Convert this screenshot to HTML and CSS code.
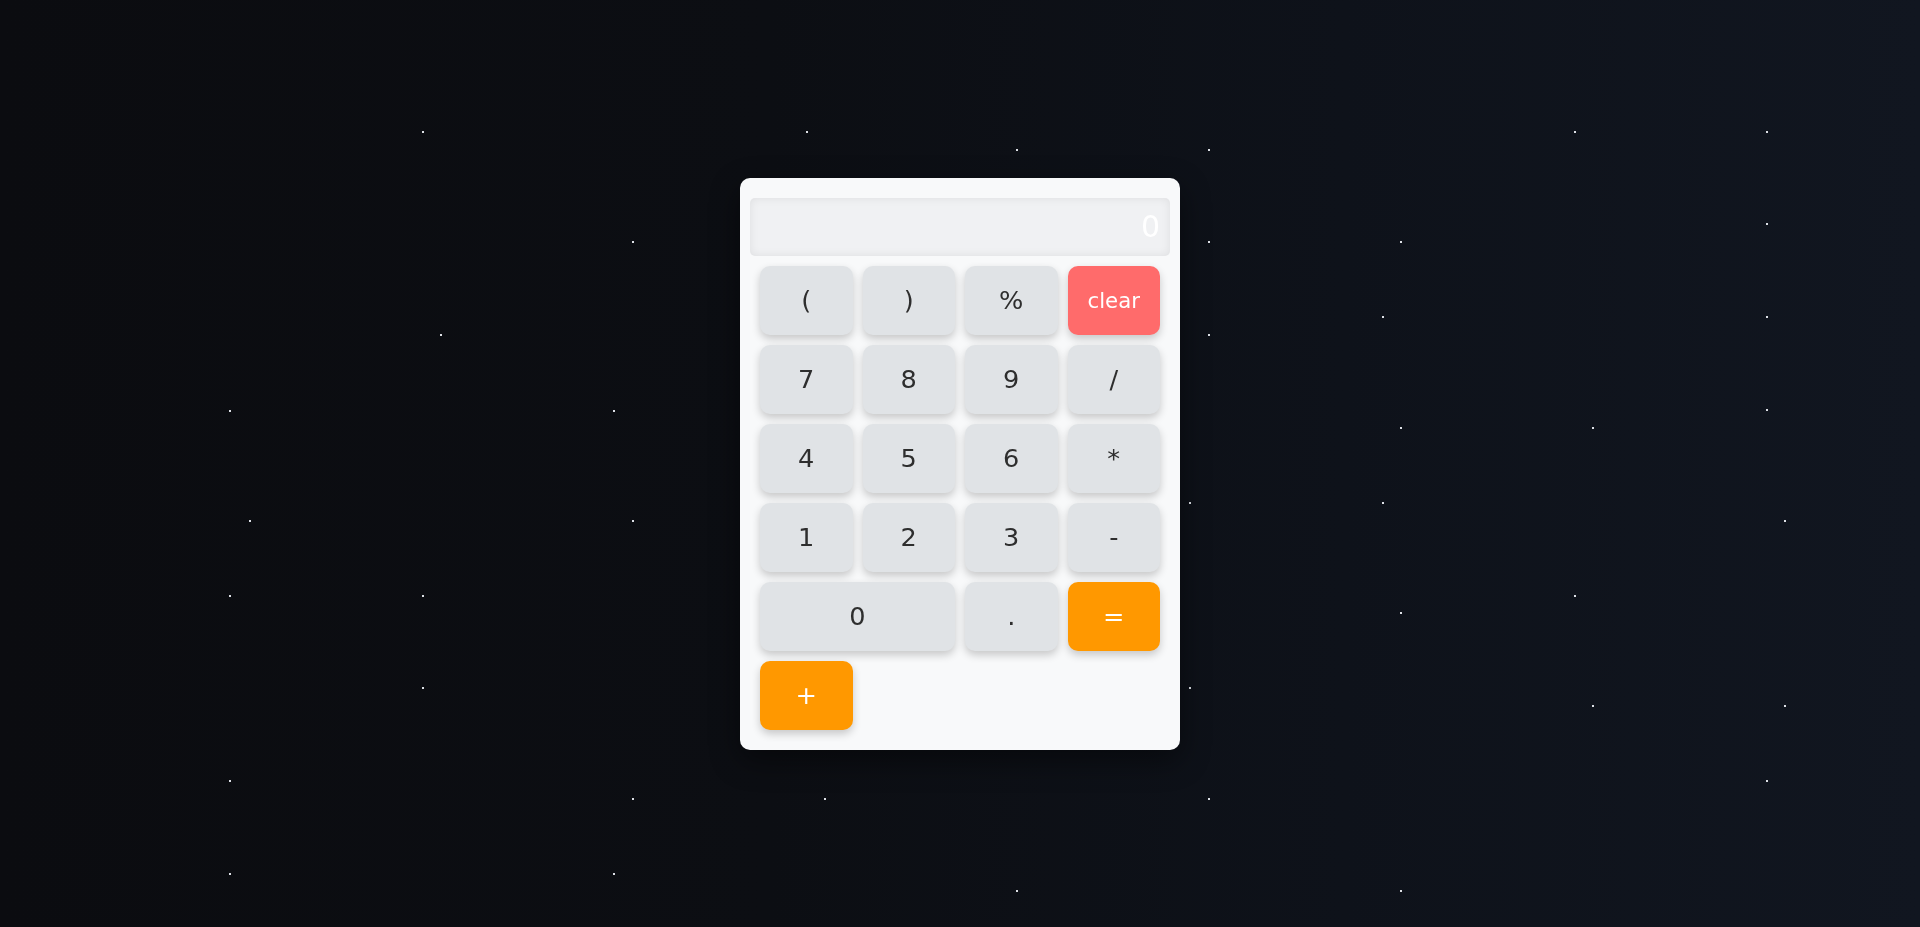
FILE: index.html
```html
<!DOCTYPE html>
<html lang="en">
<head>
<meta charset="utf-8">
<title>Calculator</title>
<link rel="stylesheet" href="styles.css">
</head>
<body>
<div class="stars" aria-hidden="true"></div>
<main class="calculator">
  <div class="display">0</div>
  <div class="keys">
    <button class="key">(</button>
    <button class="key">)</button>
    <button class="key">%</button>
    <button class="key key-clear">clear</button>
    <button class="key">7</button>
    <button class="key">8</button>
    <button class="key">9</button>
    <button class="key">/</button>
    <button class="key">4</button>
    <button class="key">5</button>
    <button class="key">6</button>
    <button class="key">*</button>
    <button class="key">1</button>
    <button class="key">2</button>
    <button class="key">3</button>
    <button class="key">-</button>
    <button class="key key-wide">0</button>
    <button class="key">.</button>
    <button class="key key-op">=</button>
    <button class="key key-op">+</button>
  </div>
</main>
</body>
</html>
```
FILE: styles.css
```css
* { box-sizing: border-box; }

html, body {
  margin: 0;
  height: 100%;
}

body {
  display: flex;
  align-items: center;
  justify-content: center;
  min-height: 100vh;
  background: linear-gradient(90deg, #0b0c10 0%, #0c0e13 40%, #0e121a 70%, #111620 100%);
  font-family: "DejaVu Sans", Verdana, sans-serif;
  overflow: hidden;
}

.stars {
  position: fixed;
  inset: 0;
  pointer-events: none;
}

.stars::before {
  content: "";
  position: absolute;
  left: 0;
  top: 0;
  width: 2px;
  height: 2px;
  background: transparent;
  box-shadow:
    422px 131px 0 0 #dde0e6, 806px 131px 0 0 #dde0e6, 1016px 149px 0 0 #dde0e6, 1208px 149px 0 0 #dde0e6,
    1574px 131px 0 0 #dde0e6, 1766px 131px 0 0 #dde0e6, 632px 241px 0 0 #dde0e6, 1208px 241px 0 0 #dde0e6,
    1400px 241px 0 0 #dde0e6, 1766px 223px 0 0 #dde0e6, 440px 334px 0 0 #dde0e6, 1208px 334px 0 0 #dde0e6,
    1382px 316px 0 0 #dde0e6, 1766px 316px 0 0 #dde0e6, 229px 410px 0 0 #dde0e6, 613px 410px 0 0 #dde0e6,
    1766px 409px 0 0 #dde0e6, 1400px 427px 0 0 #dde0e6, 1592px 427px 0 0 #dde0e6, 249px 520px 0 0 #dde0e6,
    632px 520px 0 0 #dde0e6, 1189px 502px 0 0 #dde0e6, 1382px 502px 0 0 #dde0e6, 1784px 520px 0 0 #dde0e6,
    229px 595px 0 0 #dde0e6, 422px 595px 0 0 #dde0e6, 1400px 612px 0 0 #dde0e6, 1574px 595px 0 0 #dde0e6,
    422px 687px 0 0 #dde0e6, 1189px 687px 0 0 #dde0e6, 1592px 705px 0 0 #dde0e6, 1784px 705px 0 0 #dde0e6,
    229px 780px 0 0 #dde0e6, 632px 798px 0 0 #dde0e6, 824px 798px 0 0 #dde0e6, 1208px 798px 0 0 #dde0e6,
    1766px 780px 0 0 #dde0e6, 229px 873px 0 0 #dde0e6, 613px 873px 0 0 #dde0e6, 1016px 890px 0 0 #dde0e6,
    1400px 890px 0 0 #dde0e6;
}

.calculator {
  position: relative;
  width: 440px;
  padding: 20px 10px;
  background: #f8f9fa;
  border-radius: 10px;
  box-shadow: 0 10px 30px rgba(0, 0, 0, 0.45);
}

.display {
  height: 58px;
  margin-bottom: 10px;
  padding: 0 10px;
  background: #f0f1f3;
  border-radius: 5px;
  box-shadow: inset 0 0 10px rgba(0, 0, 0, 0.08);
  color: #ffffff;
  font-size: 30px;
  line-height: 58px;
  text-align: right;
}

.keys {
  display: grid;
  grid-template-columns: repeat(4, 1fr);
  grid-auto-rows: 69px;
  gap: 10px;
  padding: 0 10px;
}

.key {
  border: none;
  border-radius: 10px;
  background: #e0e3e6;
  color: #2e2e2e;
  font-family: "DejaVu Sans", Verdana, sans-serif;
  font-size: 25.6px;
  box-shadow: 0 4px 8px rgba(0, 0, 0, 0.2);
  padding: 0;
  cursor: pointer;
}

.key-wide {
  grid-column: span 2;
}

.key-clear {
  background: #ff6b6b;
  color: #ffffff;
  font-size: 21.3px;
}

.key-op {
  background: #ff9800;
  color: #ffffff;
}
```
